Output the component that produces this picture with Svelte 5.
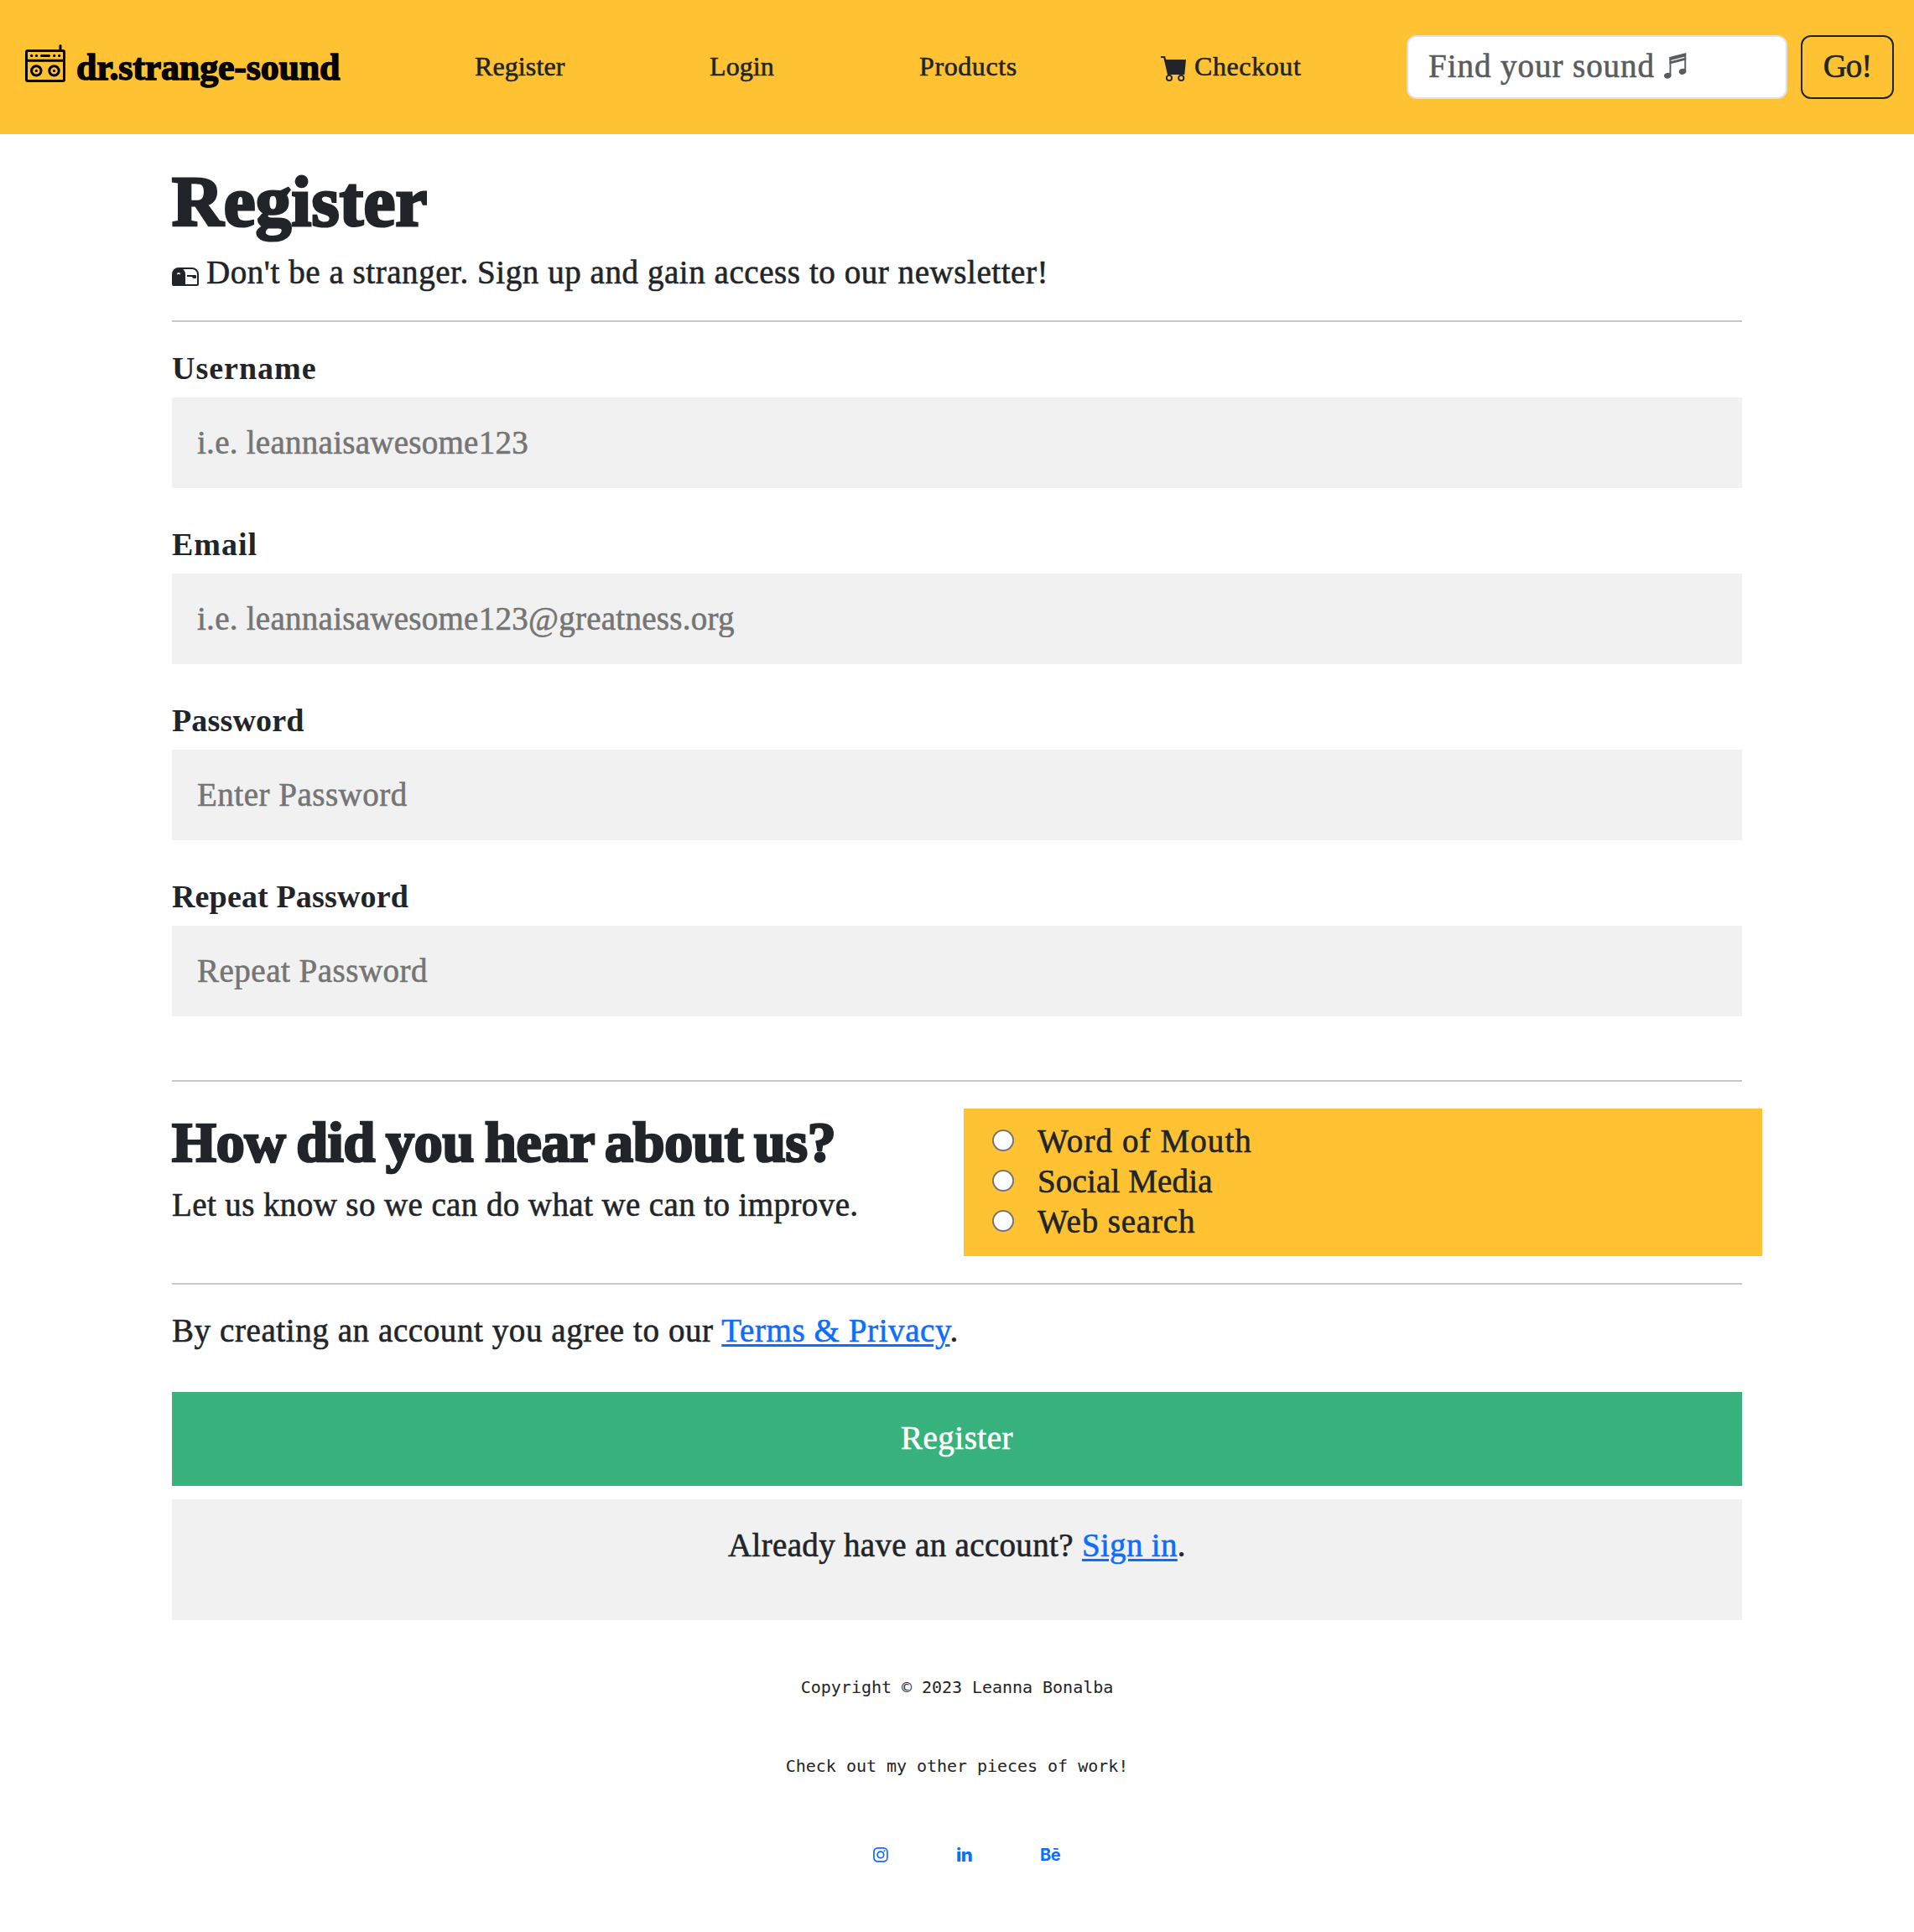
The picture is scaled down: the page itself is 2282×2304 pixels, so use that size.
<script>
  const fields = [
    { id: 'username', label: 'Username', placeholder: 'i.e. leannaisawesome123', type: 'text' },
    { id: 'email', label: 'Email', placeholder: 'i.e. leannaisawesome123@greatness.org', type: 'text' },
    { id: 'password', label: 'Password', placeholder: 'Enter Password', type: 'password' },
    { id: 'repeat', label: 'Repeat Password', placeholder: 'Repeat Password', type: 'password' }
  ];
  const sources = ['Word of Mouth', 'Social Media', 'Web search'];
</script>

<header class="navbar">
  <a class="brand" href="#home">
    <svg class="boombox" width="48" height="45" viewBox="0 0 48 45" fill="none" stroke="currentColor" stroke-width="3">
      <rect x="1.5" y="7.5" width="45" height="36" rx="1.5" />
      <path d="M1.5 19.3H46.5M42 7V1.5" stroke-linecap="round" />
      <path d="M19.5 13.4H28.5" stroke-linecap="round" />
      <circle cx="13.3" cy="31.4" r="5.7" />
      <circle cx="34.5" cy="31.4" r="5.7" />
      <g fill="currentColor" stroke="none">
        <circle cx="7.7" cy="13.4" r="1.6" />
        <circle cx="13.5" cy="13.4" r="1.6" />
        <circle cx="34.7" cy="13.4" r="1.6" />
        <circle cx="40.6" cy="13.4" r="1.6" />
        <circle cx="13.3" cy="31.4" r="1.6" />
        <circle cx="34.5" cy="31.4" r="1.6" />
      </g>
    </svg>
    <span>dr.strange-sound</span>
  </a>
  <a class="nav-link" href="#register">Register</a>
  <a class="nav-link" href="#login">Login</a>
  <a class="nav-link products" href="#products">Products</a>
  <a class="nav-link checkout" href="#checkout">
    <svg class="cart" width="31" height="31" viewBox="0 0 31 31">
      <path d="M0 0H5L6.2 4H30L28.3 22H8L3.4 2H0Z" fill="currentColor" />
      <g fill="none" stroke="currentColor" stroke-width="1.9">
        <circle cx="10" cy="26" r="3.1" />
        <circle cx="24.3" cy="26" r="3.1" />
      </g>
    </svg>
    <span>Checkout</span>
  </a>
  <div class="search" role="searchbox" tabindex="-1">
    <span>Find your sound</span>
    <svg class="note" width="27" height="31" viewBox="0 0 27 31" fill="currentColor">
      <path d="M6.5 5L26.2 0V4.2L6.5 9.2ZM6.5 10.6L26.2 5.6V8.6L6.5 13.6Z" />
      <path d="M6.5 5H8.4V27H6.5ZM24.3 1H26.2V22H24.3Z" />
      <ellipse cx="4.2" cy="27.2" rx="4.3" ry="3.4" transform="rotate(-15 4.2 27.2)" />
      <ellipse cx="22" cy="22.4" rx="4.3" ry="3.4" transform="rotate(-15 22 22.4)" />
    </svg>
  </div>
  <button class="go" type="button">Go!</button>
</header>

<main>
  <h1>Register</h1>
  <p class="lead">
    <svg class="mailbox" width="32" height="32" viewBox="0 0 16 16" fill="currentColor">
      <path d="M9 8.5h2.793l.853.854A.5.5 0 0 0 13 9.5h1a.5.5 0 0 0 .5-.5V8a.5.5 0 0 0-.5-.5H9v1z" />
      <path d="M12 3H4a4 4 0 0 0-4 4v6a1 1 0 0 0 1 1h14a1 1 0 0 0 1-1V7a4 4 0 0 0-4-4zM8 7a3.99 3.99 0 0 0-1.354-3H12a3 3 0 0 1 3 3v6H8V7zm-3.415.157C4.42 7.087 4.218 7 4 7c-.218 0-.42.086-.585.157C3.164 7.264 3 7.334 3 7a1 1 0 0 1 2 0c0 .334-.164.264-.415.157z" />
    </svg>
    <span>Don't be a stranger. Sign up and gain access to our newsletter!</span>
  </p>
  <hr class="after-lead" />

  <form>
    <div class="fields">
      {#each fields as f}
        <div class="field">
          <label for={f.id}>{f.label}</label>
          <input id={f.id} type={f.type} placeholder={f.placeholder} />
        </div>
      {/each}
    </div>
    <hr class="after-fields" />

    <section class="survey">
      <div class="question">
        <h2>How did you hear about us?</h2>
        <p>Let us know so we can do what we can to improve.</p>
      </div>
      <div class="choices">
        {#each sources as s}
          <label class="choice"><input type="radio" name="source" /><span>{s}</span></label>
        {/each}
      </div>
    </section>
    <hr class="after-survey" />

    <p class="terms">By creating an account you agree to our <a href="#terms">Terms &amp; Privacy</a>.</p>
    <button class="submit" type="button">Register</button>
  </form>

  <div class="signin">
    <p>Already have an account? <a href="#signin">Sign in</a>.</p>
  </div>
</main>

<footer>
  <p>Copyright © 2023 Leanna Bonalba</p>
  <p>Check out my other pieces of work!</p>
  <nav class="social">
    <a href="#instagram" aria-label="Instagram">
      <svg width="18" height="18" viewBox="0 0 18 18" fill="none" stroke="currentColor" stroke-width="1.7">
        <rect x="0.9" y="0.9" width="16" height="16" rx="4.4" />
        <circle cx="8.9" cy="8.9" r="3.8" />
        <circle cx="13.5" cy="4.3" r="1" fill="currentColor" stroke="none" />
      </svg>
    </a>
    <a class="linkedin" href="#linkedin">in</a>
    <a class="behance" href="#behance">Bē</a>
  </nav>
</footer>

<style>
  :global(body) {
    margin: 0;
    background: #fff;
    color: #212529;
    font: 39px/48px "Liberation Serif", "DejaVu Sans", serif;
    letter-spacing: 0.5px;
    -webkit-text-stroke: 0.6px currentColor;
  }
  h1, h2, p { margin: 0; }
  a { color: #0d6efd; text-decoration-thickness: 3px; text-underline-offset: 3px; }
  input, button { box-sizing: border-box; font: inherit; letter-spacing: inherit; margin: 0; }

  .navbar {
    box-sizing: border-box;
    height: 160px;
    padding-left: 30px;
    background: #ffc233;
    display: grid;
    grid-template-columns: 536px 280px 250px 288px 293px 454px 127px;
    align-items: center;
  }
  .brand {
    display: flex;
    align-items: center;
    gap: 13px;
    color: #000;
    text-decoration: none;
    font-size: 44px;
    font-weight: 700;
    letter-spacing: -0.2px;
    padding-top: 1px;
    -webkit-text-stroke: 1.4px currentColor;
  }
  .boombox { margin-bottom: 10px; }
  .nav-link {
    display: flex;
    align-items: center;
    color: #212529;
    text-decoration: none;
    font-size: 32px;
    letter-spacing: 0.1px;
    padding-bottom: 2px;
  }
  .products, .checkout { letter-spacing: 0.6px; }
  .checkout { gap: 9px; }
  .cart { margin-top: 7px; }
  .search {
    box-sizing: border-box;
    height: 76px;
    display: flex;
    align-items: center;
    gap: 11px;
    border: 2px solid #dee2e6;
    border-radius: 12px;
    background: #fff;
    color: #595c5f;
    padding: 0 24px 2px;
    letter-spacing: 0.95px;
  }
  .note { margin-bottom: 1px; }
  .go {
    height: 76px;
    margin-left: 16px;
    width: 111px;
    border: 2px solid #212529;
    border-radius: 12px;
    background: transparent;
    color: #212529;
    padding: 0 0 3px;
    letter-spacing: -1px;
  }

  main { margin: 0 205px; padding-top: 32px; }
  h1 {
    font-size: 85px;
    line-height: 96px;
    letter-spacing: 0.3px;
    -webkit-text-stroke: 3.2px currentColor;
  }
  .lead { display: flex; align-items: center; gap: 9px; margin-top: 13px; letter-spacing: 0.56px; }
  .mailbox { margin-top: 8px; }
  hr { border: 0; height: 2px; background: #c8c8c8; margin: 0; }
  .after-lead { margin: 33px 0 31px; }
  .fields { display: flex; flex-direction: column; gap: 43px; }
  .field { display: flex; flex-direction: column; gap: 11px; }
  .field label { font-size: 38px; font-weight: 700; letter-spacing: 0.15px; -webkit-text-stroke: 0; }
  .field:nth-child(-n + 2) label { letter-spacing: 1px; }
  .field:nth-child(-n + 2) input { letter-spacing: 0.27px; }
  .field input {
    width: 100%;
    height: 108px;
    border: 0;
    background: #f1f1f1;
    padding: 0 30px 2px;
  }
  .field input::placeholder { color: #757575; opacity: 1; }
  .after-fields { margin: 76px 0 32px; }

  .survey { display: grid; grid-template-columns: 944px 952px; }
  h2 {
    font-size: 68px;
    line-height: 80px;
    letter-spacing: -0.2px;
    word-spacing: -4px;
    white-space: nowrap;
    -webkit-text-stroke: 2.7px currentColor;
  }
  .question p { margin-top: 11px; letter-spacing: 0.4px; }
  .choices { background: #ffc233; padding: 15px 34px 17px; }
  .choice { display: flex; align-items: center; gap: 28px; letter-spacing: 1.1px; }
  .choice:nth-child(2) { letter-spacing: 0.15px; }
  .choice:nth-child(3) { letter-spacing: 0.85px; }
  .choice input {
    appearance: none;
    width: 26px;
    height: 26px;
    margin-bottom: 2px;
    border: 2px solid #767676;
    border-radius: 50%;
    background: #fff;
  }
  .after-survey { margin: 32px 0 31px; }
  .terms { letter-spacing: 0.59px; }
  .submit {
    display: block;
    width: 100%;
    height: 112px;
    margin-top: 49px;
    border: 0;
    background: #38b27c;
    color: #fff;
    padding: 0 0 2px;
  }
  .signin {
    height: 113px;
    margin-top: 16px;
    padding-top: 31px;
    background: #f1f1f1;
    text-align: center;
    letter-spacing: 0.33px;
  }

  footer {
    padding-top: 68px;
    text-align: center;
    font: 20px/24px "DejaVu Sans Mono", monospace;
    letter-spacing: -0.03px;
    -webkit-text-stroke: 0;
  }
  footer p + p { margin-top: 70px; }
  .social {
    display: grid;
    grid-template-columns: 99px 100px 30px;
    align-items: center;
    height: 24px;
    margin: 82px 0 0 1041px;
    text-align: left;
  }
  .social a { display: flex; text-decoration: none; font-family: Inter, sans-serif; font-weight: 800; }
  .social .linkedin { font-size: 22px; letter-spacing: -0.6px; }
  .social .behance { font-size: 20px; font-weight: 700; letter-spacing: -0.5px; }
</style>
